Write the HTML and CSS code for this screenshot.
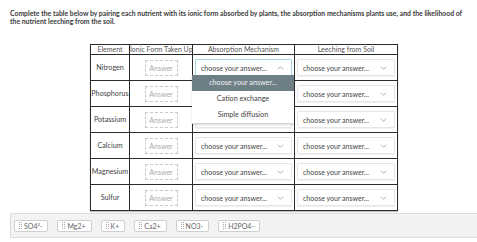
FILE: index.html
```html
<!DOCTYPE html>
<html lang="en">
<head>
  <meta charset="UTF-8">
  <title>Nutrient Table</title>
  <link rel="stylesheet" href="styles.css">
</head>
<body>
<div class="prompt">Complete the table below by pairing each nutrient with its ionic form absorbed by plants, the absorption mechanisms plants use, and the likelihood of the nutrient leeching from the soil.</div>

<div class="table-wrap">
  <table class="grid">
    <colgroup>
      <col class="c-el"><col class="c-ion"><col class="c-abs"><col class="c-lee">
    </colgroup>
    <tr class="head">
      <th>Element</th><th>Ionic Form Taken Up</th><th>Absorption Mechanism</th><th>Leeching from Soil</th>
    </tr>
    <tr>
      <td>Nitrogen</td>
      <td><div class="answer">Answer</div></td>
      <td><div class="pick focus">choose your answer... <svg viewBox="0 0 10 6"><path d="M1 5 L5 1 L9 5"/></svg></div></td>
      <td><div class="pick">choose your answer... <svg viewBox="0 0 10 6"><path d="M1 1 L5 5 L9 1"/></svg></div></td>
    </tr>
    <tr>
      <td>Phosphorus</td>
      <td><div class="answer">Answer</div></td>
      <td><div class="pick hidden-under"></div></td>
      <td><div class="pick">choose your answer... <svg viewBox="0 0 10 6"><path d="M1 1 L5 5 L9 1"/></svg></div></td>
    </tr>
    <tr>
      <td>Potassium</td>
      <td><div class="answer">Answer</div></td>
      <td><div class="pick hidden-under"></div></td>
      <td><div class="pick">choose your answer... <svg viewBox="0 0 10 6"><path d="M1 1 L5 5 L9 1"/></svg></div></td>
    </tr>
    <tr>
      <td>Calcium</td>
      <td><div class="answer">Answer</div></td>
      <td><div class="pick">choose your answer... <svg viewBox="0 0 10 6"><path d="M1 1 L5 5 L9 1"/></svg></div></td>
      <td><div class="pick">choose your answer... <svg viewBox="0 0 10 6"><path d="M1 1 L5 5 L9 1"/></svg></div></td>
    </tr>
    <tr>
      <td>Magnesium</td>
      <td><div class="answer">Answer</div></td>
      <td><div class="pick">choose your answer... <svg viewBox="0 0 10 6"><path d="M1 1 L5 5 L9 1"/></svg></div></td>
      <td><div class="pick">choose your answer... <svg viewBox="0 0 10 6"><path d="M1 1 L5 5 L9 1"/></svg></div></td>
    </tr>
    <tr>
      <td>Sulfur</td>
      <td><div class="answer">Answer</div></td>
      <td><div class="pick">choose your answer... <svg viewBox="0 0 10 6"><path d="M1 1 L5 5 L9 1"/></svg></div></td>
      <td><div class="pick">choose your answer... <svg viewBox="0 0 10 6"><path d="M1 1 L5 5 L9 1"/></svg></div></td>
    </tr>
  </table>
  <div class="menu">
    <div class="opt sel">choose your answer...</div>
    <div class="opt">Cation exchange</div>
    <div class="opt">Simple diffusion</div>
  </div>
</div>

<div class="bank">
  <div class="chip"><span class="grip"></span>SO4²-</div>
  <div class="chip"><span class="grip"></span>Mg2+</div>
  <div class="chip"><span class="grip"></span>K+</div>
  <div class="chip"><span class="grip"></span>Ca2+</div>
  <div class="chip"><span class="grip"></span>NO3-</div>
  <div class="chip"><span class="grip"></span>H2PO4-</div>
</div>
</body>
</html>
```
FILE: styles.css
```css
body, html {
  margin: 0;
  padding: 0;
  background: #fff;
  font-family: Lato, 'Open Sans', sans-serif;
  color: #333;
}
.prompt {
  padding: 9px 4px 0 10px;
  font-size: 6.85px;
  font-weight: 700;
  line-height: 8px;
  color: #3a3a3a;
}
.table-wrap {
  position: relative;
  width: 307px;
  margin: 19px 0 0 90px;
}
.grid {
  border-collapse: collapse;
  width: 307px;
  table-layout: fixed;
  border: 1.5px solid #2b2b2b;
  box-shadow: 0 1px 1px rgba(0,0,0,0.25);
}
.c-el { width: 39px; }
.c-ion { width: 63px; }
.c-abs { width: 102px; }
.c-lee { width: 103px; }
.grid th, .grid td {
  border: 1px solid #2b2b2b;
  padding: 0;
  text-align: center;
  white-space: nowrap;
  overflow: hidden;
}
.grid th {
  font-weight: 400;
  height: 9px;
  line-height: 9px;
  font-size: 7px;
  color: #555;
}
.grid td {
  height: 25px;
  font-size: 7.2px;
  color: #444;
}
.answer {
  width: 31px;
  height: 14px;
  margin: 0 auto;
  border: 1px dashed #c9c9c9;
  color: #aaa;
  line-height: 14px;
  font-size: 7px;
}
.pick {
  display: flex;
  align-items: center;
  justify-content: space-between;
  margin: 0 2px;
  height: 15px;
  padding: 0 7px 0 5px;
  border: 1px solid #e6e6e6;
  border-radius: 1px;
  box-shadow: 0 1px 1px rgba(0,0,0,0.06);
  color: #444;
  font-size: 7px;
  text-align: left;
}
.pick.focus {
  border-color: #a6d3e2;
}
.pick svg {
  width: 7px;
  height: 4px;
  fill: none;
  stroke: #888;
  stroke-width: 1;
}
.menu {
  position: absolute;
  left: 102px;
  top: 31px;
  width: 102px;
  height: 48px;
  background: #fff;
  border-bottom: 1px solid #d5d5d5;
  box-shadow: 0 1px 2px rgba(0,0,0,0.15);
}
.opt {
  height: 16px;
  line-height: 16px;
  text-align: center;
  font-size: 7.2px;
  color: #444;
}
.opt.sel {
  background: #6f7f86;
  color: #eef2f3;
}
.bank {
  display: flex;
  align-items: center;
  gap: 7px;
  margin: 2px 0 0 10px;
  height: 23px;
  padding: 0 3px;
  background: #f3f3f3;
  border: 1px solid #dcdcdc;
  border-right: none;
  border-radius: 2px 0 0 2px;
}
.chip {
  display: flex;
  align-items: center;
  height: 10px;
  padding: 0 5px 0 4px;
  margin-right: 2px;
  background: #fff;
  border: 1px solid #cfcfcf;
  border-radius: 2px;
  font-size: 7px;
  color: #666;
}
.grip {
  width: 3px;
  height: 7px;
  margin-right: 2px;
  border-left: 1px dotted #aaa;
  border-right: 1px dotted #aaa;
  box-sizing: border-box;
}
```
